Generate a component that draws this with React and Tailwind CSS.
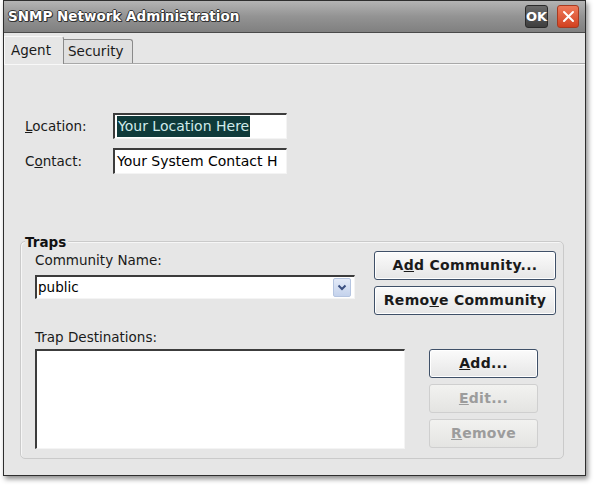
import React from "react";

const font = { fontFamily: '"DejaVu Sans", Verdana, sans-serif' };

function Btn({ children, disabled, w = "w-[182px]" }) {
  return (
    <div
      className={`${w} h-[29px] flex items-center justify-center rounded-[3px] border text-[14px] font-bold tracking-[0.3px] ${
        disabled
          ? "border-[#cfcfcf] bg-gradient-to-b from-[#f2f2f0] to-[#e4e4e2] text-[#9c9c9c]"
          : "border-[#3f5068] bg-gradient-to-b from-[#fbfbfb] to-[#e6e6e6] text-[#1a1a1a] shadow-[inset_0_0_0_1px_#ffffff]"
      }`}
    >
      {children}
    </div>
  );
}

function Input({ children, w, h = "h-[26px]" }) {
  return (
    <div
      className={`${w} ${h} bg-white border-t-2 border-l-2 border-t-[#3c3c3c] border-l-[#3c3c3c] border-b border-r border-b-[#f4f4f4] border-r-[#f4f4f4] flex items-center pl-[2px] text-[14px] text-black overflow-hidden whitespace-nowrap`}
    >
      {children}
    </div>
  );
}

export default function App() {
  return (
    <div className="w-[595px] h-[486px] bg-white overflow-hidden" style={font}>
      <div className="ml-[3px] w-[583px] h-[476px] border border-[#2e2e2e] bg-[#e6e6e6] flex flex-col shadow-[2px_3px_5px_rgba(0,0,0,0.45)]">
        {/* Title bar */}
        <div className="h-[32px] shrink-0 flex items-center justify-between pl-[4px] pr-[6px] bg-gradient-to-b from-[#b4b4b4] via-[#939393] to-[#808080] border-b border-[#4a4a4a]">
          <span className="text-[13.5px] font-bold text-white [text-shadow:-1px_0_#333,1px_0_#333,0_1px_#333,0_-1px_#333,1px_1px_#333]">
            SNMP Network Administration
          </span>
          <div className="flex items-center gap-[9px]">
            <div className="w-[23px] h-[23px] rounded-[3px] bg-gradient-to-b from-[#6a6a6a] to-[#3e3e3e] border border-[#2a2a2a] flex items-center justify-center text-white text-[13px] font-bold leading-none">
              OK
            </div>
            <div className="w-[22px] h-[23px] rounded-[3px] bg-gradient-to-b from-[#ee7a5a] to-[#d2401e] border border-[#a83a20] flex items-center justify-center">
              <svg width="13" height="13" viewBox="0 0 13 13">
                <path d="M2 2 L11 11 M11 2 L2 11" stroke="white" strokeWidth="2" strokeLinecap="round" />
              </svg>
            </div>
          </div>
        </div>

        {/* Tabs */}
        <div className="h-[31px] shrink-0 flex items-end border-b border-[#a8a8a8] relative">
          <div className="h-[28px] w-[60px] -mb-[1px] bg-[#e6e6e6] border-t border-l border-r border-t-[#f8f8f8] border-l-[#f8f8f8] border-r-[#8a8a8a] rounded-tr-[3px] flex items-center pl-[6px] text-[13.5px] text-[#1a1a1a] relative z-10">
            Agent
          </div>
          <div className="h-[24px] w-[69px] bg-[#e0e0e0] border-t border-r border-[#8a8a8a] rounded-tr-[3px] flex items-center pl-[4px] text-[13.5px] text-[#1a1a1a]">
            Security
          </div>
        </div>

        {/* Content */}
        <div className="flex-1 flex flex-col border-t border-[#f8f8f8]">
          <div className="pl-[21px] mt-[48px] flex items-center">
            <span className="w-[88px] text-[13.5px] text-[#1a1a1a]">
              <u>L</u>ocation:
            </span>
            <Input w="w-[174px]">
              <span className="bg-[#0f3a3a] text-[#cfeaea] px-[1px]">Your Location Here</span>
            </Input>
          </div>
          <div className="pl-[21px] mt-[9px] flex items-center">
            <span className="w-[88px] text-[13.5px] text-[#1a1a1a]">
              C<u>o</u>ntact:
            </span>
            <Input w="w-[174px]">Your System Contact H</Input>
          </div>

          {/* Traps group */}
          <div className="ml-[16px] mr-[21px] mt-[67px] h-[218px] border border-[#cacaca] rounded-[5px] shadow-[inset_1px_1px_0_#f6f6f6] relative pl-[14px] pr-[6px]">
            <span className="absolute -top-[10px] left-[4px] bg-[#e6e6e6] pr-[2px] text-[13.5px] font-bold text-[#111]">
              Traps
            </span>
            <div className="flex items-start">
              <div className="w-[320px] pt-[10px]">
                <div className="text-[13.5px] leading-[16px] text-[#1a1a1a]">Community Name:</div>
                <div className="mt-[7px] w-[320px] h-[24px] bg-white border-t-2 border-l-2 border-t-[#3c3c3c] border-l-[#3c3c3c] border-b border-r border-b-[#f4f4f4] border-r-[#f4f4f4] flex items-center justify-between pl-[1px] pr-[3px]">
                  <span className="text-[13.5px] text-black">public</span>
                  <div className="w-[18px] h-[19px] rounded-[2px] bg-gradient-to-b from-[#e4ebf8] to-[#c4d2ec] border border-[#b4c4e0] flex items-center justify-center">
                    <svg width="10" height="7" viewBox="0 0 10 7">
                      <path d="M1.5 1.5 L5 5 L8.5 1.5" stroke="#3a4f80" strokeWidth="2" fill="none" />
                    </svg>
                  </div>
                </div>
              </div>
              <div className="ml-[19px] pt-[9px] flex flex-col gap-[6px]">
                <Btn>
                  A<u>d</u>d Community...
                </Btn>
                <Btn>
                  Remo<u>v</u>e Community
                </Btn>
              </div>
            </div>
            <div className="flex items-start">
              <div className="pt-[14px]">
                <div className="text-[13.5px] leading-[16px] text-[#1a1a1a]">Trap Destinations:</div>
                <div className="mt-[4px] w-[370px] h-[100px] bg-white border-t-2 border-l-2 border-t-[#3c3c3c] border-l-[#3c3c3c] border-b border-r border-b-[#f4f4f4] border-r-[#f4f4f4]" />
              </div>
              <div className="ml-[24px] pt-[34px] flex flex-col gap-[6px]">
                <Btn w="w-[109px]">
                  <u>A</u>dd...
                </Btn>
                <Btn w="w-[109px]" disabled>
                  <u>E</u>dit...
                </Btn>
                <Btn w="w-[109px]" disabled>
                  <u>R</u>emove
                </Btn>
              </div>
            </div>
          </div>
        </div>
      </div>
    </div>
  );
}
